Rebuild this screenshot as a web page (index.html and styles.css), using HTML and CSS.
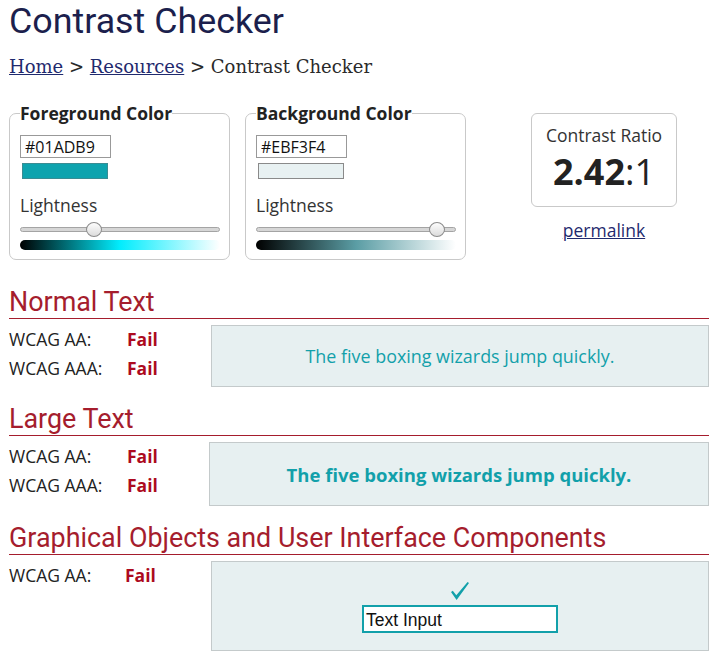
FILE: index.html
```html
<!DOCTYPE html>
<html lang="en">
<head>
<meta charset="utf-8">
<title>Contrast Checker</title>
<link rel="stylesheet" href="styles.css">
</head>
<body>
<div class="page">
  <h1 class="title">Contrast Checker</h1>
  <nav class="crumbs"><a href="#">Home</a> &gt; <a href="#">Resources</a> &gt; Contrast Checker</nav>

  <div class="picker-row">
    <fieldset class="picker">
      <legend>Foreground Color</legend>
      <input class="hex" type="text" value="#01ADB9">
      <div class="swatch swatch-fg"></div>
      <div class="light-label">Lightness</div>
      <div class="slider">
        <div class="track"></div>
        <div class="thumb" style="left:66px"></div>
      </div>
      <div class="grad grad-fg"></div>
    </fieldset>

    <fieldset class="picker">
      <legend>Background Color</legend>
      <input class="hex" type="text" value="#EBF3F4">
      <div class="swatch swatch-bg"></div>
      <div class="light-label">Lightness</div>
      <div class="slider">
        <div class="track"></div>
        <div class="thumb" style="left:173px"></div>
      </div>
      <div class="grad grad-bg"></div>
    </fieldset>

    <div class="ratio-col">
      <div class="ratio-box">
        <div class="ratio-label">Contrast Ratio</div>
        <div class="ratio-value"><b>2.42</b>:1</div>
      </div>
      <a class="permalink" href="#">permalink</a>
    </div>
  </div>

  <section class="result">
    <h2 class="sec-title">Normal Text</h2>
    <div class="result-row">
      <div class="levels">
        <div class="level"><span class="lvl-name">WCAG AA:</span><span class="fail">Fail</span></div>
        <div class="level"><span class="lvl-name">WCAG AAA:</span><span class="fail">Fail</span></div>
      </div>
      <div class="sample sample-normal">The five boxing wizards jump quickly.</div>
    </div>
  </section>

  <section class="result result-large">
    <h2 class="sec-title">Large Text</h2>
    <div class="result-row">
      <div class="levels levels-narrow">
        <div class="level"><span class="lvl-name">WCAG AA:</span><span class="fail">Fail</span></div>
        <div class="level"><span class="lvl-name">WCAG AAA:</span><span class="fail">Fail</span></div>
      </div>
      <div class="sample sample-large">The five boxing wizards jump quickly.</div>
    </div>
  </section>

  <section class="result result-large">
    <h2 class="sec-title">Graphical Objects and User Interface Components</h2>
    <div class="result-row">
      <div class="levels">
        <div class="level"><span class="lvl-name lvl-short">WCAG AA:</span><span class="fail">Fail</span></div>
      </div>
      <div class="sample sample-ui">
        <svg class="check" width="18" height="18" viewBox="0 0 18 18" aria-hidden="true">
          <path d="M0 10 L1.8 8.8 L5.3 13.2 L16.6 0 L18 1 L5.6 18 Z" fill="#12a0aa"/>
        </svg>
        <div class="ui-input">Text Input</div>
      </div>
    </div>
  </section>
</div>
</body>
</html>
```

FILE: styles.css
```css
* { box-sizing: border-box; }

body {
  margin: 0;
  background: #fff;
  color: #222;
  font-family: "Open Sans", "Noto Sans", sans-serif;
  font-size: 17.5px;
}

.page {
  width: 718px;
  padding: 0 9px;
}

.title {
  margin: 0;
  font-family: Roboto, "Noto Sans", sans-serif;
  font-weight: 400;
  font-size: 35.8px;
  line-height: 42px;
  color: #1c1f4d;
}

.crumbs {
  margin-top: 14px;
  font-family: "DejaVu Serif", "Liberation Serif", serif;
  font-size: 18px;
  line-height: 21px;
  color: #2a2a2a;
}

.crumbs a { color: #1f2a6e; }

.picker-row {
  display: flex;
  align-items: flex-start;
  margin-top: 24px;
}

.picker {
  width: 221px;
  margin: 0 15px 0 0;
  padding: 10px 10px 9px 10px;
  border: 1px solid #c9c9c9;
  border-radius: 7px;
  min-width: 0;
  display: flex;
  flex-direction: column;
  align-items: flex-start;
}

.picker legend {
  padding: 0;
  font-weight: 700;
  font-size: 17.5px;
  line-height: 24px;
  color: #222;
}

.hex {
  width: 91px;
  height: 23px;
  margin: 0;
  padding: 0 0 0 4px;
  border: 1px solid #999;
  border-radius: 0;
  font-family: "Open Sans", sans-serif;
  font-size: 16px;
  color: #111;
  background: #fff;
}

.swatch {
  width: 86px;
  height: 16px;
  margin: 5px 0 0 1.5px;
  border: 1px solid #7c7c7c;
}

.swatch-fg { background: #0ea3ae; border-color: #3a8c93; }
.swatch-bg { background: #e8f1f2; border-color: #8a8a8a; }

.light-label {
  margin-top: 14px;
  line-height: 24px;
  color: #333;
}

.slider {
  position: relative;
  width: 200px;
  height: 15px;
  margin-top: 5px;
}

.track {
  margin-top: 5px;
  height: 5px;
  border: 1px solid #a4a4a4;
  border-radius: 3px;
  background: #d6d6d6;
}

.thumb {
  position: absolute;
  top: 0;
  width: 16px;
  height: 15px;
  border: 1px solid #8c8c8c;
  border-radius: 50%;
  background: linear-gradient(#fdfdfd, #dcdcdc);
}

.grad {
  width: 200px;
  height: 10px;
  margin-top: 3px;
  border-radius: 5px;
}

.grad-fg { background: linear-gradient(to right, #000, hsl(184, 99%, 50%), #fff); }
.grad-bg { background: linear-gradient(to right, #000, hsl(186, 29%, 50%), #fff); }

.ratio-col {
  margin-left: 50px;
  margin-top: 12px;
  display: flex;
  flex-direction: column;
  align-items: center;
  width: 146px;
}

.ratio-box {
  width: 146px;
  padding: 9px 0 10px;
  border: 1px solid #c9c9c9;
  border-radius: 6px;
  text-align: center;
}

.ratio-label {
  line-height: 24px;
  color: #333;
}

.ratio-value {
  font-size: 36px;
  line-height: 49px;
  color: #222;
}

.ratio-value b { font-weight: 700; }

.permalink {
  margin-top: 11px;
  line-height: 24px;
  color: #1f2a6e;
}

.result { margin-top: 27px; }
.result-large { margin-top: 17px; }

.sec-title {
  margin: 0;
  padding-bottom: 1px;
  border-bottom: 1px solid #a51d2d;
  font-family: Roboto, "Noto Sans", sans-serif;
  font-weight: 400;
  font-size: 26.9px;
  line-height: 30px;
  color: #a51d2d;
}

.result-row {
  display: flex;
  align-items: flex-start;
  margin-top: 6px;
}

.levels { width: 202px; flex: none; }
.levels-narrow { width: 200px; }

.level {
  display: flex;
  line-height: 29px;
}

.lvl-name { width: 118px; color: #222; }
.lvl-short { width: 116px; }

.fail {
  font-weight: 700;
  color: #ad0a1e;
}

.sample {
  flex: 1;
  display: flex;
  align-items: center;
  justify-content: center;
  background: #e7f0f1;
  border: 1px solid #c4cacb;
  color: #12a0aa;
}

.sample-normal {
  height: 62px;
  font-size: 17.9px;
}

.sample-large {
  height: 64px;
  font-weight: 700;
  font-size: 18.5px;
}

.sample-ui {
  height: 90px;
  flex-direction: column;
  gap: 5px;
  padding-top: 2px;
}

.check { display: block; }

.ui-input {
  width: 196px;
  height: 28px;
  padding: 0 0 0 2px;
  border: 2px solid #12a0aa;
  background: #fff;
  font-family: "Liberation Sans", Arial, sans-serif;
  font-size: 17.5px;
  line-height: 26px;
  color: #111;
}
```
